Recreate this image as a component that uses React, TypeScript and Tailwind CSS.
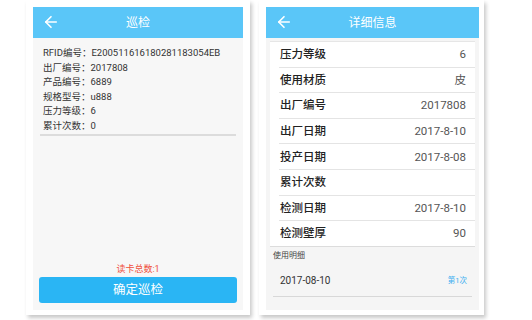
import { ArrowLeft } from "lucide-react";

const font = "font-['Roboto','Noto_Sans_CJK_SC',sans-serif]";

const scanRows = [
  ["RFID编号", "E200511616180281183054EB"],
  ["出厂编号", "2017808"],
  ["产品编号", "6889"],
  ["规格型号", "u888"],
  ["压力等级", "6"],
  ["累计次数", "0"],
];

const detailRows = [
  ["压力等级", "6"],
  ["使用材质", "皮"],
  ["出厂编号", "2017808"],
  ["出厂日期", "2017-8-10"],
  ["投产日期", "2017-8-08"],
  ["累计次数", ""],
  ["检测日期", "2017-8-10"],
  ["检测壁厚", "90"],
];

function Header({ title }: { title: string }) {
  return (
    <div className="relative flex h-[31px] shrink-0 items-center justify-center bg-[#5ac6f8]">
      <ArrowLeft size={18} strokeWidth={2.2} className="absolute left-[9px] top-[6px] text-white" />
      <span className="text-[12px] text-white">{title}</span>
    </div>
  );
}

function ScanPhone() {
  return (
    <div className="flex h-[315px] w-[224px] flex-col bg-white px-[7px] pb-[5px] pt-[7px] shadow-[2px_3px_4px_rgba(0,0,0,0.22)]">
      <Header title="巡检" />
      <div className="flex flex-1 flex-col bg-[#f7f7f7]">
        <div className="px-[10px] pt-[8px]">
          {scanRows.map(([k, v]) => (
            <p key={k} className="h-[14.5px] text-[9.5px] leading-[14.5px] text-[#333]">
              {k}：{v}
            </p>
          ))}
        </div>
        <div className="mx-[7px] mt-[1px] h-[2px] bg-[#dcdcdc]" />
        <div className="flex-1" />
        <p className="text-center text-[9px] leading-[12px] text-[#f0503c]">读卡总数:1</p>
        <button className="mx-[6px] mb-[7px] mt-[2px] h-[26px] rounded-[3px] bg-[#2ab5f4] text-[12.5px] text-white">
          确定巡检
        </button>
      </div>
    </div>
  );
}

function DetailPhone() {
  return (
    <div className="flex h-[315px] w-[225px] flex-col bg-white pb-[5px] pl-[7px] pr-[5px] pt-[7px] shadow-[2px_3px_4px_rgba(0,0,0,0.22)]">
      <Header title="详细信息" />
      <div className="flex flex-1 flex-col bg-[#f5f5f5]">
        <div className="mx-[4px] mt-[3px] border-t border-[#e6e6e6] bg-white">
          {detailRows.map(([k, v], i) => (
            <div key={k} className="relative flex h-[25.6px] items-center justify-between pl-[10px] pr-[9px]">
              <span className="text-[11.5px] font-medium text-[#222]">{k}</span>
              <span className="text-[11.5px] text-[#555]">{v}</span>
              <div
                className={
                  i === detailRows.length - 1
                    ? "absolute bottom-0 left-0 right-0 h-px bg-[#dcdcdc]"
                    : "absolute bottom-0 left-[9px] right-0 h-px bg-[#e4e4e4]"
                }
              />
            </div>
          ))}
        </div>
        <p className="pl-[7px] pt-[4px] text-[8px] leading-[10px] text-[#444]">使用明细</p>
        <div className="mx-[7px] mt-[8px] flex h-[28px] items-center justify-between border-b border-[#d8d8d8] pb-[4px] pl-[7px] pr-[5px]">
          <span className="text-[10px] text-[#333]">2017-08-10</span>
          <span className="text-[7.5px] text-[#3aaef0]">第1次</span>
        </div>
      </div>
    </div>
  );
}

export default function App() {
  return (
    <div className={`${font} flex h-[320px] w-[532px] gap-[9px] bg-white pl-[26px]`}>
      <ScanPhone />
      <DetailPhone />
    </div>
  );
}
